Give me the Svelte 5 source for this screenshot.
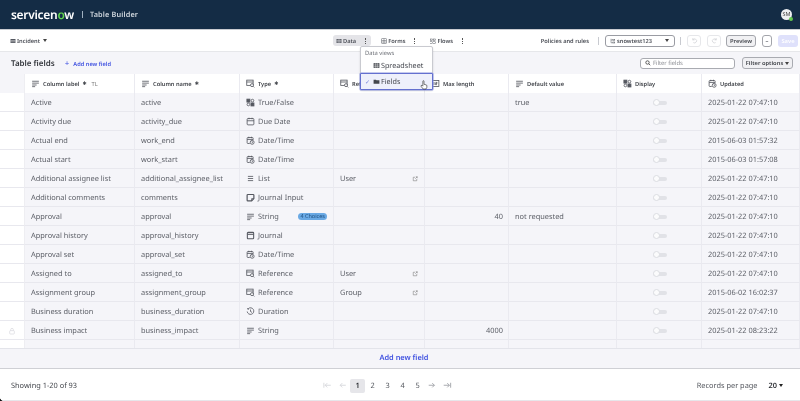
<script>
	const columns = [
		{ label: 'Column label', icon: 'lines', req: true, tl: true },
		{ label: 'Column name', icon: 'lines', req: true },
		{ label: 'Type', icon: 'ref', req: true },
		{ label: 'Reference', icon: 'ref' },
		{ label: 'Max length', icon: 'num' },
		{ label: 'Default value', icon: 'lines' },
		{ label: 'Display', icon: 'bool' },
		{ label: 'Updated', icon: 'datetime' }
	];

	const rows = [
		{ label: 'Active', name: 'active', type: 'True/False', icon: 'bool', def: 'true', updated: '2025-01-22 07:47:10' },
		{ label: 'Activity due', name: 'activity_due', type: 'Due Date', icon: 'date', updated: '2025-01-22 07:47:10' },
		{ label: 'Actual end', name: 'work_end', type: 'Date/Time', icon: 'datetime', updated: '2015-06-03 01:57:32' },
		{ label: 'Actual start', name: 'work_start', type: 'Date/Time', icon: 'datetime', updated: '2015-06-03 01:57:08' },
		{ label: 'Additional assignee list', name: 'additional_assignee_list', type: 'List', icon: 'list', ref: 'User', updated: '2025-01-22 07:47:10' },
		{ label: 'Additional comments', name: 'comments', type: 'Journal Input', icon: 'journalin', updated: '2025-01-22 07:47:10' },
		{ label: 'Approval', name: 'approval', type: 'String', icon: 'lines', badge: '4 Choices', max: '40', def: 'not requested', updated: '2025-01-22 07:47:10' },
		{ label: 'Approval history', name: 'approval_history', type: 'Journal', icon: 'journal', updated: '2025-01-22 07:47:10' },
		{ label: 'Approval set', name: 'approval_set', type: 'Date/Time', icon: 'datetime', updated: '2025-01-22 07:47:10' },
		{ label: 'Assigned to', name: 'assigned_to', type: 'Reference', icon: 'ref', ref: 'User', updated: '2025-01-22 07:47:10' },
		{ label: 'Assignment group', name: 'assignment_group', type: 'Reference', icon: 'ref', ref: 'Group', updated: '2015-06-02 16:02:37' },
		{ label: 'Business duration', name: 'business_duration', type: 'Duration', icon: 'clock', updated: '2025-01-22 07:47:10' },
		{ label: 'Business impact', name: 'business_impact', type: 'String', icon: 'lines', max: '4000', locked: true, updated: '2025-01-22 08:23:22' },
		{ label: '', name: '', type: '', updated: '', blank: true }
	];
</script>

{#snippet icon(kind)}
	<svg class="ico" viewBox="0 0 12 12" fill="none" stroke="currentColor" stroke-width="1.1">
		{#if kind === 'lines'}
			<path d="M1.500 3h9M1.500 5.500h9M1.500 8h6M1.500 10.200h4" />
		{:else if kind === 'list'}
			<path d="M2.500 3.200h7M2.500 6h7M2.500 8.800h7" />
		{:else if kind === 'ref'}
			<rect x="1" y="1.500" width="8.500" height="7" /><path d="M1 4h8.500" /><circle cx="8" cy="8.200" r="2" fill="#fff" /><path d="M9.500 9.700l1.500 1.500" />
		{:else if kind === 'bool'}
			<rect x="1.200" y="1.500" width="4" height="4" fill="currentColor" /><circle cx="8.600" cy="3.500" r="1.800" /><circle cx="3.200" cy="8.600" r="1.800" /><rect x="6.600" y="6.600" width="4" height="4" fill="currentColor" />
		{:else if kind === 'date'}
			<rect x="1.500" y="2" width="9" height="8.500" rx="1.200" /><path d="M1.500 5h9M4 1v2M8 1v2" />
		{:else if kind === 'datetime'}
			<path d="M5 10H2.500a1 1 0 0 1-1-1V3a1 1 0 0 1 1-1h6a1 1 0 0 1 1 1v2M1.500 4.600h8M3.700 1v2M7.300 1v2" /><circle cx="8.200" cy="8.400" r="2.600" /><path d="M8.200 7v1.500l1 .6" />
		{:else if kind === 'journalin'}
			<path d="M1.500 3a1 1 0 0 1 1-1h7a1 1 0 0 1 1 1v4.500L7.500 10.500H2.500a1 1 0 0 1-1-1z" stroke-width="1.600" /><path d="M7.500 10.500V7.500h3" />
		{:else if kind === 'journal'}
			<rect x="1.800" y="1.800" width="8.400" height="8.600" rx="1" stroke-width="1.400" /><path d="M1.800 4.400h8.400" stroke-width="1.400" />
		{:else if kind === 'clock'}
			<path d="M3 2.200A4.400 4.400 0 1 1 1.600 6" /><path d="M6 3.400V6l2 1.200M1.500 2.200l1.500 0v1.600" />
		{:else if kind === 'num'}
			<rect x="1.500" y="2" width="9" height="8" /><path d="M4 4v4M6 4.500h2v1.400H6v1.600h2" />
		{/if}
	</svg>
{/snippet}

{#snippet pagerArrow(dir, stop)}
	<svg class="arrow" viewBox="0 0 12 12" fill="none" stroke="currentColor" stroke-width="1.200">
		{#if dir === 'left'}
			<path d="M11 6H3M6 3L3 6l3 3" />{#if stop}<path d="M1.200 2.500v7" />{/if}
		{:else}
			<path d="M1 6h8M6 3l3 3-3 3" />{#if stop}<path d="M10.800 2.500v7" />{/if}
		{/if}
	</svg>
{/snippet}

<div class="page">
	<header class="topbar">
		<div class="brand">
			<span class="logo">servicen<span class="logo-o">o</span>w</span>
			<span class="sep"></span>
			<span class="app-name">Table Builder</span>
		</div>
		<div class="avatar">SM<span class="presence"></span></div>
	</header>

	<div class="toolbar">
		<div class="table-pick">
			<svg class="ico tiny" viewBox="0 0 12 12" fill="currentColor"><path d="M1 2h10v8H1z" /><path d="M1 5h10M1 7.500h10" stroke="#fff" stroke-width=".8" /></svg>
			<b>Incident</b><span class="caret"></span>
		</div>
		<nav class="tabs">
			<div class="tab active">
				<svg class="ico tiny" viewBox="0 0 12 12" fill="currentColor"><path d="M1 2h10v8H1z" /><path d="M1 5h10M1 7.500h10M4.500 2v8M7.500 2v8" stroke="#e4e4e8" stroke-width=".8" /></svg>
				<b>Data</b><span class="dots"></span>
			</div>
			<div class="tab">
				<svg class="ico tiny" viewBox="0 0 12 12" fill="none" stroke="currentColor"><rect x="1.500" y="1.500" width="9" height="9" /><path d="M6 1.500v9M1.500 5h9M1.500 8h9" /></svg>
				<b>Forms</b><span class="dots"></span>
			</div>
			<div class="tab">
				<svg class="ico tiny" viewBox="0 0 12 12" fill="none" stroke="currentColor"><rect x="1" y="2" width="4" height="3" /><rect x="7" y="2" width="4" height="3" /><rect x="1" y="7.500" width="4" height="3" /><rect x="7" y="7.500" width="4" height="3" /></svg>
				<b>Flows</b><span class="dots"></span>
			</div>
		</nav>
		<div class="actions">
			<b class="policies">Policies and rules</b>
			<span class="divider"></span>
			<div class="scope">
				<span class="scope-name"><svg class="ico tiny" viewBox="0 0 12 12" fill="none" stroke="currentColor"><path d="M2 1.500v8h3M2 4h3" /><rect x="5.500" y="3" width="4" height="2" /><rect x="5.500" y="8" width="4" height="2" /></svg><b>snowtest123</b></span>
				<span class="caret"></span>
			</div>
			<span class="divider"></span>
			<span class="icon-btn undo"><svg viewBox="0 0 12 12" fill="none" stroke="#c4c6cc"><path d="M3 2v3h3M3 5a3.500 3.500 0 1 1 1 4.500" /></svg></span>
			<span class="icon-btn"><svg viewBox="0 0 12 12" fill="none" stroke="#c4c6cc"><path d="M9 2v3H6M9 5a3.500 3.500 0 1 0-1 4.500" /></svg></span>
			<button class="btn preview">Preview</button>
			<button class="btn more">–</button>
			<button class="btn save">Save</button>
		</div>
	</div>

	<div class="fields-bar">
		<h1>Table fields</h1>
		<span class="add-link"><span class="plus">+</span>Add new field</span>
		<div class="filter-side">
			<div class="filter-input">
				<svg class="ico tiny" viewBox="0 0 12 12" fill="none" stroke="#333" stroke-width="1.500"><circle cx="5" cy="5" r="3.400" /><path d="M7.500 7.500l3 3" /></svg>
				<span>Filter fields</span>
			</div>
			<button class="filter-options">Filter options<span class="caret"></span></button>
		</div>
	</div>

	<div class="grid">
		<div class="row head">
			<div class="cell gutter"></div>
			{#each columns as col}
				<div class="cell">
					{@render icon(col.icon)}
					<b>{col.label}</b>
					{#if col.req}<span class="req">✱</span>{/if}
					{#if col.tl}<span class="tl">TL</span>{/if}
				</div>
			{/each}
		</div>
		<div class="body">
			{#each rows as r}
				<div class="row">
					<div class="cell gutter">
						{#if r.locked}
							<svg class="lock" viewBox="0 0 12 12" fill="none" stroke="#d6d7dc"><rect x="2.500" y="5.500" width="7" height="5" rx="1" /><path d="M4 5.500V4a2 2 0 0 1 4 0v1.500" /></svg>
						{/if}
					</div>
					<div class="cell">{r.label}</div>
					<div class="cell">{r.name}</div>
					<div class="cell type">
						{#if r.icon}{@render icon(r.icon)}{/if}
						<span>{r.type}</span>
						{#if r.badge}<span class="badge">{r.badge}</span>{/if}
					</div>
					<div class="cell ref">
						<span>{r.ref ?? ''}</span>
						{#if r.ref}
							<svg class="open" viewBox="0 0 12 12" fill="none" stroke="#777" stroke-width="1.100"><path d="M6 2.500H2.500v7h7V6M7.500 1.500h3v3M10.500 1.500L6.500 5.500" /></svg>
						{/if}
					</div>
					<div class="cell max">{r.max ?? ''}</div>
					<div class="cell">{r.def ?? ''}</div>
					<div class="cell center">
						{#if !r.blank}<span class="toggle"><span class="knob"></span></span>{/if}
					</div>
					<div class="cell">{r.updated}</div>
				</div>
			{/each}
		</div>
		<div class="add-row">Add new field</div>
	</div>

	<footer class="pager">
		<span class="count">Showing 1-20 of 93</span>
		<div class="pages">
			<span class="off">{@render pagerArrow('left', true)}</span>
			<span class="off">{@render pagerArrow('left', false)}</span>
			<span class="num current">1</span>
			<span class="num">2</span>
			<span class="num">3</span>
			<span class="num">4</span>
			<span class="num">5</span>
			<span class="on">{@render pagerArrow('right', false)}</span>
			<span class="on">{@render pagerArrow('right', true)}</span>
		</div>
		<div class="per-page">Records per page <b>20</b><span class="caret dark"></span></div>
	</footer>

	<div class="menu">
		<div class="menu-title">Data views</div>
		<div class="menu-item">
			<svg viewBox="0 0 12 12" fill="currentColor"><path d="M1 2h10v8H1z" /><path d="M1 5h10M1 7.500h10M4.500 2v8M7.500 2v8" stroke="#fff" stroke-width=".7" /></svg>
			Spreadsheet
		</div>
		<div class="menu-item selected">
			<span class="check">✓</span>
			<svg viewBox="0 0 12 12" fill="currentColor"><path d="M1 3h4l1 1h5v6H1z" /></svg>
			Fields
		</div>
		<svg class="cursor" viewBox="0 0 14 16"><path d="M5 1.500a1 1 0 0 1 2 0V7h1.500l3.500 1.500V12l-1.500 3H5.500L2 10.500V9l1.500-.5L5 10z" fill="#fff" stroke="#222" stroke-width="1" /></svg>
	</div>
	<span class="corner"></span>
</div>

<style>
	:global(body) {
		margin: 0;
		background: #fff;
	}

	.page {
		position: relative;
		width: 800px;
		height: 401px;
		overflow: hidden;
		display: flex;
		flex-direction: column;
		font-family: 'Noto Sans', 'Open Sans', sans-serif;
		font-size: 7.4px;
		text-rendering: geometricPrecision;
		color: #5b5e66;
		background: #fff;
		filter: blur(0.25px);
	}

	b {
		font-weight: 600;
	}

	.ico {
		width: 9px;
		height: 9px;
		flex: none;
		color: #555860;
	}

	.ico.tiny {
		width: 6px;
		height: 6px;
	}

	.caret {
		display: inline-block;
		width: 0;
		height: 0;
		border: 2.5px solid transparent;
		border-top: 3px solid #444;
		border-bottom: 0;
	}

	.topbar {
		flex: none;
		height: 29px;
		padding: 0 8px 0 11px;
		display: flex;
		align-items: center;
		justify-content: space-between;
		background: #142c45;
		color: #e8ecf0;
		border-bottom: 1px solid #c9cbd0;
	}

	.brand {
		display: flex;
		align-items: center;
	}

	.logo {
		font-size: 12px;
		font-weight: 600;
		letter-spacing: -0.3px;
		color: #fff;
		line-height: 1;
	}

	.logo-o {
		color: #62d84e;
	}

	.sep {
		width: 1px;
		height: 7px;
		margin: 0 7px 0 8px;
		background: #9fb0c0;
	}

	.app-name {
		font-size: 7.300px;
		font-weight: 600;
		color: #cfd6dd;
		letter-spacing: 0.15px;
	}

	.avatar {
		position: relative;
		width: 11px;
		height: 11px;
		border-radius: 50%;
		background: #eef0f2;
		color: #444;
		font-size: 5.500px;
		line-height: 11px;
		text-align: center;
	}

	.presence {
		position: absolute;
		right: -1px;
		bottom: -1px;
		width: 4px;
		height: 4px;
		background: #62c84e;
		border-radius: 50%;
	}

	.toolbar {
		flex: none;
		height: 21px;
		padding: 0 2px 0 10px;
		display: flex;
		align-items: center;
		border-bottom: 1px solid #e6e7ea;
		font-size: 5.700px;
		color: #4a4d55;
	}

	.table-pick {
		display: flex;
		align-items: center;
		gap: 1px;
		width: 323px;
	}

	.table-pick .caret {
		margin-left: 2px;
	}

	.tabs {
		display: flex;
		align-items: center;
	}

	.tab {
		display: flex;
		align-items: center;
		gap: 1px;
		height: 11px;
		padding: 0 5px 0 3px;
		margin-right: 7px;
		border-radius: 3px;
		white-space: nowrap;
	}

	.tab.active {
		background: #e4e4e8;
	}

	.dots {
		height: 6px;
		margin-left: 8px;
		border-left: 1px dotted #555;
	}

	.actions {
		margin-left: auto;
		display: flex;
		align-items: center;
		gap: 3px;
	}

	.policies {
		margin-right: 4px;
	}

	.divider {
		width: 1px;
		height: 8px;
		background: #c8cad0;
		margin: 0 2px;
	}

	.scope {
		box-sizing: border-box;
		width: 70px;
		height: 12px;
		padding: 0 5px 0 4px;
		margin-left: 1px;
		display: flex;
		align-items: center;
		justify-content: space-between;
		border: 1px solid #9a9ca3;
		border-radius: 3px;
	}

	.scope-name {
		display: flex;
		align-items: center;
		gap: 1px;
	}

	.icon-btn {
		box-sizing: border-box;
		width: 14px;
		height: 12px;
		border: 1px solid #e6e7ea;
		border-radius: 3px;
		display: flex;
		align-items: center;
		justify-content: center;
		margin-right: 2px;
	}

	.icon-btn.undo {
		margin-left: 1px;
		margin-right: 3px;
	}

	.icon-btn svg {
		width: 7px;
		height: 7px;
	}

	.btn {
		box-sizing: border-box;
		height: 12px;
		padding: 0;
		border-radius: 3px;
		font: 600 5.800px 'Noto Sans', sans-serif;
		color: #44474e;
	}

	.preview {
		width: 30px;
		background: #f1f1f3;
		border: 1px solid #a3a5ab;
	}

	.more {
		width: 10px;
		margin-left: 3px;
		background: #fff;
		border: 1px solid #a3a5ab;
	}

	.save {
		width: 20px;
		margin-left: 3px;
		background: #dfe1fb;
		border: 0;
		color: #fff;
	}

	.fields-bar {
		flex: none;
		height: 22px;
		padding: 0 7px 0 11px;
		display: flex;
		align-items: center;
		background: #f5f5f9;
	}

	h1 {
		margin: 0 9px 0 0;
		font-size: 8px;
		font-weight: 600;
		color: #33363c;
	}

	.add-link {
		color: #3f51e0;
		font-size: 5.700px;
		font-weight: 600;
	}

	.plus {
		margin: 0 4px 0 1px;
		font-size: 8px;
		font-weight: 400;
	}

	.filter-side {
		margin-left: auto;
		display: flex;
		align-items: center;
		gap: 7px;
	}

	.filter-input {
		box-sizing: border-box;
		width: 95px;
		height: 11px;
		padding: 0 2px 0 4px;
		display: flex;
		align-items: center;
		gap: 2px;
		background: #fff;
		border: 1px solid #a9abb1;
		border-radius: 3px;
		font-size: 5.800px;
		color: #8a8c92;
	}

	.filter-options {
		box-sizing: border-box;
		display: flex;
		align-items: center;
		justify-content: center;
		gap: 2px;
		height: 12px;
		width: 51px;
		padding: 0;
		background: #f0f0f3;
		border: 1px solid #a9abb1;
		border-radius: 3px;
		font: 600 5.800px 'Noto Sans', sans-serif;
		color: #3f4248;
	}

	.grid {
		flex: 1;
		min-height: 0;
		display: flex;
		flex-direction: column;
		background: #f5f5f9;
	}

	.row {
		flex: none;
		height: 19px;
		display: grid;
		grid-template-columns: 25px 110px 105px 94px 91px 84px 108px 85px 98px;
	}

	.head {
		background: #fff;
		font-size: 5.700px;
		color: #3f4248;
	}

	.head .cell {
		gap: 3px;
		border-bottom: 0;
	}

	.head .gutter {
		background: #f5f5f9;
	}

	.req {
		font-size: 5px;
	}

	.tl {
		color: #777;
		margin-left: 2px;
	}

	.body {
		flex: 1;
		min-height: 0;
		overflow: hidden;
	}

	.body .row {
		background: #f5f5f9;
	}

	.body .cell {
		padding-top: 1px;
	}

	.cell {
		box-sizing: border-box;
		display: flex;
		align-items: center;
		min-width: 0;
		padding-left: 6px;
		padding-right: 5px;
		white-space: nowrap;
		border-right: 1px solid #eaeaf0;
		border-bottom: 1px solid #e8e8ee;
	}

	.gutter {
		background: #fff;
		justify-content: center;
		padding: 0;
		border-right-color: #eeeef2;
	}

	.type {
		gap: 3px;
	}

	.badge {
		margin-left: auto;
		margin-right: 1px;
		padding: 0 2px;
		height: 7px;
		line-height: 7px;
		font-size: 5.500px;
		color: #1d4f80;
		background: #6aa9e4;
		border-radius: 4px;
	}

	.ref {
		justify-content: space-between;
		padding-right: 6px;
	}

	.open {
		width: 6px;
		height: 6px;
	}

	.lock {
		width: 8px;
		height: 8px;
	}

	.max {
		justify-content: flex-end;
		padding-right: 5px;
	}

	.center {
		justify-content: center;
	}

	.toggle {
		position: relative;
		display: block;
		width: 14px;
		height: 4px;
		border-radius: 2px;
		background: #e1e2e7;
	}

	.knob {
		position: absolute;
		left: 0;
		top: -1.500px;
		width: 7px;
		height: 7px;
		box-sizing: border-box;
		border-radius: 50%;
		background: #fbfbfc;
		border: 1px solid #dcdde2;
	}

	.add-row {
		flex: none;
		height: 21px;
		line-height: 19px;
		padding-left: 8px;
		box-sizing: border-box;
		text-align: center;
		font-size: 7.400px;
		font-weight: 600;
		color: #3f51e0;
		background: #f5f5f9;
		border-top: 1px solid #e3e4ea;
		border-bottom: 1.500px solid #cfd0d5;
	}

	.pager {
		flex: none;
		height: 32px;
		padding: 2px 17px 0 11px;
		box-sizing: border-box;
		display: grid;
		grid-template-columns: 309px auto 1fr;
		align-items: center;
		font-size: 7.400px;
		color: #55585f;
		border-bottom: 1px solid #e6e6ea;
	}

	.count {
		color: #44474d;
	}

	.pages {
		display: flex;
		align-items: center;
	}

	.num {
		width: 15px;
		height: 14px;
		line-height: 14px;
		text-align: center;
		color: #55585f;
	}

	.num.current {
		background: #e6e6ea;
		border-radius: 2px;
		color: #2c2f34;
		font-weight: 600;
	}

	.off,
	.on {
		width: 15px;
		display: flex;
		justify-content: center;
	}

	.off {
		color: #d3d4d9;
	}

	.on {
		color: #9a9ca2;
	}

	.arrow {
		width: 8.500px;
		height: 8.500px;
	}

	.per-page {
		justify-self: end;
		display: flex;
		align-items: center;
	}

	.per-page b {
		margin-left: 11px;
		margin-right: 2px;
		color: #2c2f34;
	}

	.caret.dark {
		border-top-color: #222;
	}

	.menu {
		position: absolute;
		left: 360px;
		top: 46px;
		width: 73px;
		box-sizing: border-box;
		background: #fff;
		border: 1px solid #c9cad0;
		border-radius: 2px;
		box-shadow: 0 1px 2px rgba(0, 0, 0, 0.15);
		color: #44474e;
	}

	.menu-title {
		height: 11px;
		line-height: 12px;
		padding-left: 4px;
		font-size: 5.800px;
		color: #6a6d74;
	}

	.menu-item {
		height: 15px;
		display: flex;
		align-items: center;
		padding-left: 12px;
		gap: 1px;
		font-size: 7.200px;
		position: relative;
	}

	.menu-item svg {
		width: 7px;
		height: 7px;
	}

	.selected {
		height: 15px;
		margin: 0 -1px -1px;
		background: #eef0fb;
		border: 1px solid #6470cf;
		box-shadow: 0 0 0 0.5px #8c95dd;
		border-radius: 1px;
	}

	.check {
		position: absolute;
		left: 4px;
		color: #7b86dd;
		font-size: 6px;
	}

	.cursor {
		position: absolute;
		left: 59px;
		top: 33px;
		width: 8px;
		height: 10px;
	}

	.corner {
		position: absolute;
		left: 0;
		bottom: 0;
		width: 3px;
		height: 3px;
		background: radial-gradient(circle at 100% 0, transparent 2.5px, #111 3px);
	}
</style>
